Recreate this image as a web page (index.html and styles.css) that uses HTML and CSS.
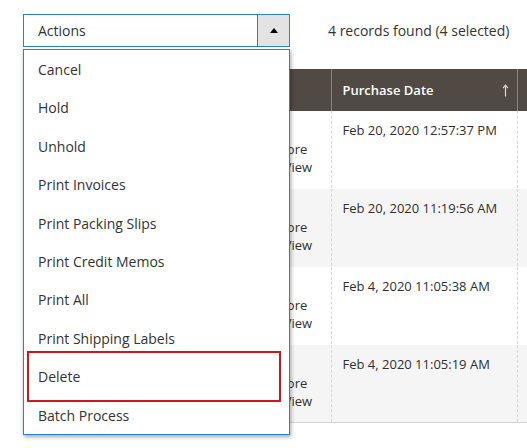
FILE: index.html
```html
<!DOCTYPE html>
<html>
<head>
<meta charset="utf-8">
<link rel="stylesheet" href="styles.css">
</head>
<body>
<div class="page">
  <div class="toolbar">
    <div class="actions">
      <div class="actions-btn">
        <span class="actions-label">Actions</span>
        <span class="actions-toggle"><span class="tri"></span></span>
      </div>
      <ul class="menu">
        <li>Cancel</li>
        <li>Hold</li>
        <li>Unhold</li>
        <li>Print Invoices</li>
        <li>Print Packing Slips</li>
        <li>Print Credit Memos</li>
        <li>Print All</li>
        <li>Print Shipping Labels</li>
        <li class="hl">Delete</li>
        <li>Batch Process</li>
      </ul>
      <div class="mark"></div>
    </div>
    <div class="records">4 records found (4 selected)</div>
  </div>
  <table class="grid">
    <thead>
      <tr>
        <th class="c0"></th>
        <th class="c1">Store View</th>
        <th class="c2"><div class="th-inner"><span>Purchase Date</span><svg class="sort" width="7" height="13" viewBox="0 0 7 13"><path d="M3.5 1.5V12.5" stroke="#d9d6d3" stroke-width="1.2" fill="none"/><path d="M1 4.2L3.5 1.2L6 4.2" stroke="#d9d6d3" stroke-width="1.2" fill="none"/></svg></div></th>
        <th class="c3"></th>
      </tr>
    </thead>
    <tbody>
      <tr>
        <td class="c0"></td>
        <td class="c1">Main Website<br>Main Website Store<br><span class="sv">Default Store View</span></td>
        <td class="c2">Feb 20, 2020 12:57:37 PM</td>
        <td class="c3"></td>
      </tr>
      <tr class="alt">
        <td class="c0"></td>
        <td class="c1">Main Website<br>Main Website Store<br><span class="sv">Default Store View</span></td>
        <td class="c2">Feb 20, 2020 11:19:56 AM</td>
        <td class="c3"></td>
      </tr>
      <tr>
        <td class="c0"></td>
        <td class="c1">Main Website<br>Main Website Store<br><span class="sv">Default Store View</span></td>
        <td class="c2">Feb 4, 2020 11:05:38 AM</td>
        <td class="c3"></td>
      </tr>
      <tr class="alt">
        <td class="c0"></td>
        <td class="c1">Main Website<br>Main Website Store<br><span class="sv">Default Store View</span></td>
        <td class="c2">Feb 4, 2020 11:05:19 AM</td>
        <td class="c3"></td>
      </tr>
    </tbody>
  </table>
</div>
</body>
</html>
```

FILE: styles.css
```css
html, body {
  margin: 0;
  padding: 0;
  background: #fff;
}
body {
  font-family: "Open Sans", "Liberation Sans", sans-serif;
  font-size: 14px;
  color: #303030;
  width: 527px;
  height: 448px;
  overflow: hidden;
}
.page {
  padding: 14px 0 0 23px;
}
.toolbar {
  display: flex;
  align-items: center;
  height: 33px;
}
.actions {
  position: relative;
  width: 267px;
  z-index: 5;
}
.actions-btn {
  display: flex;
  height: 31px;
  border: 1px solid #2b84be;
  box-sizing: content-box;
  background: #fff;
}
.actions-label {
  flex: 1;
  padding-left: 14px;
  line-height: 31px;
  color: #333;
}
.actions-toggle {
  width: 31px;
  border-left: 1px solid #2b84be;
  background: #e3e3e3;
  display: flex;
  align-items: center;
  justify-content: center;
}
.tri {
  width: 0;
  height: 0;
  border-left: 4px solid transparent;
  border-right: 4px solid transparent;
  border-bottom: 5px solid #000;
}
.menu {
  position: absolute;
  left: 0;
  top: 35px;
  width: 265px;
  margin: 0;
  padding: 0;
  list-style: none;
  background: #fff;
  border: 1px solid #2b84be;
  box-shadow: 1px 2px 4px rgba(0, 0, 0, 0.35);
}
.menu li {
  height: 38.4px;
  line-height: 39.4px;
  padding-left: 14px;
  color: #333;
}
.mark {
  position: absolute;
  left: 4px;
  top: 337px;
  width: 250px;
  height: 47px;
  border: 2px solid #d0161b;
}
.records {
  margin-left: 38px;
  color: #333;
}
.grid {
  margin-top: 22px;
  border-collapse: collapse;
  table-layout: fixed;
  width: 520px;
}
.grid th {
  background: #514943;
  color: #fff;
  font-weight: 600;
  font-size: 13px;
  text-align: left;
  height: 42px;
  padding: 0 11px;
  box-sizing: border-box;
  border-left: 1px solid #8a837f;
  border-right: 1px solid #8a837f;
}
.grid th.c0 { border-left: 0; }
.th-inner {
  display: flex;
  align-items: center;
  justify-content: space-between;
  padding-right: 0;
  margin-right: -3px;
}
.grid td {
  vertical-align: top;
  font-size: 13px;
  padding: 10px 11px 13px;
  line-height: 18px;
  border-left: 1px dashed #d6d6d6;
  border-right: 1px dashed #d6d6d6;
  border-bottom: 1px solid #fff;
}
.grid td.c0 { border-left: 0; }
.grid tr.alt td {
  background: #f5f5f5;
  border-bottom-color: #f5f5f5;
}
.grid tbody tr:last-child td {
  border-bottom: 1px solid #d6d6d6;
}
.c0 { width: 147px; }
.c1 { width: 161px; }
.c2 { width: 186px; }
.c3 { width: 26px; }
.grid td.c1 { padding-left: 19px; padding-top: 11px; padding-bottom: 12px; white-space: nowrap; }
.grid td.c2 { white-space: nowrap; }
.sv { margin-left: 11px; }
```
